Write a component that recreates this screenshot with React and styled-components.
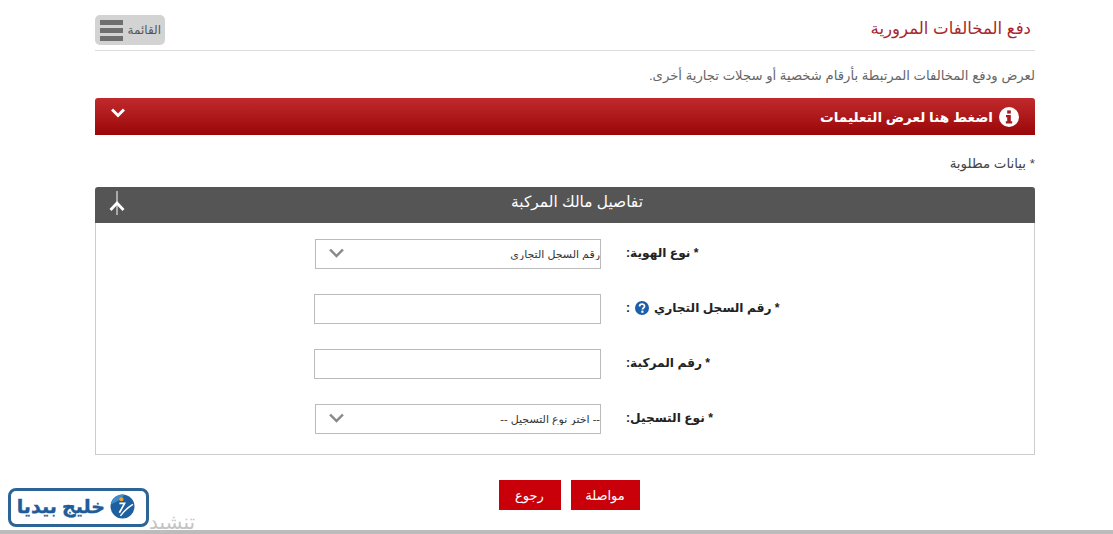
import React from 'react';
import styled, { createGlobalStyle } from 'styled-components';

const GlobalStyle = createGlobalStyle`
  html, body {
    margin: 0;
    padding: 0;
    background: #fff;
    font-family: "Liberation Sans", "DejaVu Sans", sans-serif;
  }
`;

const Page = styled.div`
  position: relative;
  height: 534px;
  overflow: hidden;
  display: flex;
  flex-direction: column;
`;

const Content = styled.main`
  width: 940px;
  margin-left: 95px;
  direction: rtl;
`;

const PageHeader = styled.header`
  display: flex;
  justify-content: space-between;
  align-items: flex-start;
  height: 51px;
  padding: 15px 4px 0 0;
  box-sizing: border-box;
  border-bottom: 1px solid #ddd;
`;

const PageTitle = styled.h1`
  margin: 4px 0 0;
  font-size: 16.6px;
  font-weight: normal;
  color: #a8282c;
`;

const MenuButton = styled.button`
  direction: rtl;
  display: flex;
  align-items: center;
  justify-content: space-between;
  width: 70px;
  height: 30px;
  padding: 0 4px 0 5px;
  border: 0;
  border-radius: 5px;
  background: #d3d3d3;
  color: #555;
  font: 12px "Liberation Sans", "DejaVu Sans", sans-serif;
`;

const Burger = styled.span`
  display: flex;
  flex-direction: column;
  gap: 3px;
  width: 23px;
  flex: none;

  i {
    display: block;
    height: 5px;
    background: #6f6f6f;
  }
`;

const Intro = styled.p`
  margin: 17px 0 14px;
  height: 16px;
  line-height: 16px;
  font-size: 13.2px;
  color: #666;
`;

const InstructionsBar = styled.div`
  display: flex;
  justify-content: space-between;
  height: 37px;
  padding: 0 16px;
  border-radius: 3px 3px 0 0;
  background: linear-gradient(#c12a2c, #9a0709);
  color: #fff;
`;

const InstructionsLabel = styled.span`
  display: flex;
  align-items: center;
  gap: 6px;
  font-size: 13.6px;
  font-weight: bold;
`;

const BarChevron = styled.svg`
  width: 14px;
  height: 10px;
  margin-top: 10px;
  fill: none;
  stroke: #fff;
  stroke-width: 3;
`;

const Required = styled.p`
  margin: 21px 0 15px;
  height: 16px;
  line-height: 16px;
  font-size: 13.4px;
  color: #444;
`;

const SectionBar = styled.div`
  display: flex;
  align-items: center;
  justify-content: center;
  position: relative;
  height: 36px;
  padding: 0 0 6px 24px;
  box-sizing: border-box;
  border-radius: 3px 3px 0 0;
  background: #555;
  color: #fff;
  font-size: 15.4px;
`;

const ToggleIcon = styled.svg`
  position: absolute;
  left: 14px;
  top: 4px;
  width: 16px;
  height: 24px;
`;

const FormPanel = styled.section`
  display: flex;
  flex-direction: column;
  gap: 25px;
  height: 232px;
  box-sizing: border-box;
  padding: 16px 234px 0 0;
  border: 1px solid #ccc;
  border-top: 0;
`;

const FormRow = styled.div`
  display: flex;
  align-items: flex-start;
  gap: 25px;
  height: 30px;
`;

const Label = styled.label`
  display: flex;
  align-items: center;
  justify-content: flex-end;
  width: 174px;
  height: 28px;
  font-size: 12.2px;
  font-weight: bold;
  color: #222;
  white-space: pre;
`;

const Help = styled.svg`
  width: 14px;
  height: 14px;
  margin: 0 5px;
  flex: none;
`;

const SelectBox = styled.div`
  position: relative;
  width: 286px;
  height: 30px;
`;

const Select = styled.select`
  appearance: none;
  width: 100%;
  height: 100%;
  box-sizing: border-box;
  padding: 0;
  border: 1px solid #bbb;
  border-radius: 0;
  background: #fff;
  color: #333;
  font: 11px "Liberation Sans", "DejaVu Sans", sans-serif;
`;

const SelectChevron = styled.svg`
  position: absolute;
  left: 14px;
  top: 9px;
  width: 15px;
  height: 10px;
  fill: none;
  stroke: #8a8a8a;
  stroke-width: 2.4;
  pointer-events: none;
`;

const Input = styled.input`
  width: 287px;
  height: 30px;
  box-sizing: border-box;
  border: 1px solid #bbb;
  background: #fff;
`;

const Actions = styled.div`
  display: flex;
  justify-content: center;
  gap: 10px;
  margin-top: 25px;
  padding-left: 8px;
`;

const ActionButton = styled.button`
  width: ${({ $wide }) => ($wide ? 69 : 62)}px;
  height: 30px;
  padding: 0;
  border: 0;
  background: #c90009;
  color: #fff;
  font: 13px "Liberation Sans", "DejaVu Sans", sans-serif;
`;

const Footer = styled.footer`
  margin-top: auto;
`;

const CutOffText = styled.div`
  width: 195px;
  height: 20px;
  line-height: 24px;
  font-size: 20px;
  color: #c4c4c4;
  text-align: right;
  white-space: nowrap;
`;

const BottomStrip = styled.div`
  height: 4px;
  background: #bbb;
`;

const LogoBadge = styled.div`
  position: absolute;
  left: 8px;
  top: 488px;
  width: 141px;
  height: 39px;
  box-sizing: border-box;
  display: flex;
  align-items: center;
  gap: 5px;
  padding: 0 11px 2px 0;
  border: 3px solid #2d6496;
  border-radius: 8px;
  background: #fff;
  direction: rtl;
`;

const LogoText = styled.span`
  font-size: 19px;
  font-weight: bold;
  color: #1f5c9a;
  -webkit-text-stroke: 0.4px #1f5c9a;
  white-space: nowrap;
`;

const Chevron = ({ as: Svg, points }) => (
  <Svg viewBox="0 0 14 10" preserveAspectRatio="none">
    <polyline points={points} />
  </Svg>
);

const LogoMark = () => (
  <svg width="25" height="25" viewBox="0 0 24 24">
    <circle cx="12" cy="12" r="11.5" fill="#1d5f9f" />
    <path d="M0.8 10 A11.5 11.5 0 0 1 14 0.6 L9 6 Z" fill="#3f8cc8" />
    <circle cx="11" cy="5" r="2" fill="#f0a030" />
    <path d="M9 9 L14 9 L9 18" fill="none" stroke="#fff" strokeWidth="1.6" />
    <path d="M10 21 C13 17 17 13 22 10" fill="none" stroke="#fff" strokeWidth="1.4" />
  </svg>
);

const App = () => (
  <Page>
    <GlobalStyle />
    <Content>
      <PageHeader>
        <PageTitle>دفع المخالفات المرورية</PageTitle>
        <MenuButton>
          القائمة
          <Burger>
            <i />
            <i />
            <i />
          </Burger>
        </MenuButton>
      </PageHeader>
      <Intro>لعرض ودفع المخالفات المرتبطة بأرقام شخصية أو سجلات تجارية أخرى.</Intro>
      <InstructionsBar>
        <InstructionsLabel>
          <svg width="20" height="20" viewBox="0 0 20 20">
            <circle cx="10" cy="10" r="10" fill="#fff" />
            <rect x="8.2" y="3.4" width="3.6" height="3.2" fill="#a81a1c" />
            <path d="M7 8h4.8v6.2H13.2v2.2H6.8v-2.2h1.4v-4H7z" fill="#a81a1c" />
          </svg>
          اضغط هنا لعرض التعليمات
        </InstructionsLabel>
        <Chevron as={BarChevron} points="1,1.5 7,7.5 13,1.5" />
      </InstructionsBar>
      <Required>* بيانات مطلوبة</Required>
      <SectionBar>
        تفاصيل مالك المركبة
        <ToggleIcon viewBox="0 0 16 24">
          <line x1="8" y1="0" x2="8" y2="24" stroke="#fff" strokeWidth="1" />
          <polyline points="1.5,19 8,12 14.5,19" fill="none" stroke="#fff" strokeWidth="2.8" />
        </ToggleIcon>
      </SectionBar>
      <FormPanel>
        <FormRow>
          <Label>* نوع الهوية:</Label>
          <SelectBox>
            <Select defaultValue="cr">
              <option value="cr">رقم السجل التجاري</option>
            </Select>
            <Chevron as={SelectChevron} points="1,1.5 7,8 13,1.5" />
          </SelectBox>
        </FormRow>
        <FormRow>
          <Label>
            * رقم السجل التجاري
            <Help viewBox="0 0 14 14">
              <circle cx="7" cy="7" r="7" fill="#1c5ea8" />
              <path d="M4.6 5.4c0-3 4.9-3 4.9-.2 0 1.8-2 1.6-2 3.3" fill="none" stroke="#fff" strokeWidth="1.8" />
              <rect x="6.3" y="9.6" width="2.2" height="2.2" fill="#fff" />
            </Help>
            :
          </Label>
          <Input type="text" />
        </FormRow>
        <FormRow>
          <Label>* رقم المركبة:</Label>
          <Input type="text" />
        </FormRow>
        <FormRow>
          <Label>* نوع التسجيل:</Label>
          <SelectBox>
            <Select defaultValue="">
              <option value="">-- اختر نوع التسجيل --</option>
            </Select>
            <Chevron as={SelectChevron} points="1,1.5 7,8 13,1.5" />
          </SelectBox>
        </FormRow>
      </FormPanel>
      <Actions>
        <ActionButton $wide>مواصلة</ActionButton>
        <ActionButton>رجوع</ActionButton>
      </Actions>
    </Content>
    <Footer>
      <CutOffText>تنشيد</CutOffText>
      <BottomStrip />
    </Footer>
    <LogoBadge>
      <LogoMark />
      <LogoText>خليج بيديا</LogoText>
    </LogoBadge>
  </Page>
);

export default App;
